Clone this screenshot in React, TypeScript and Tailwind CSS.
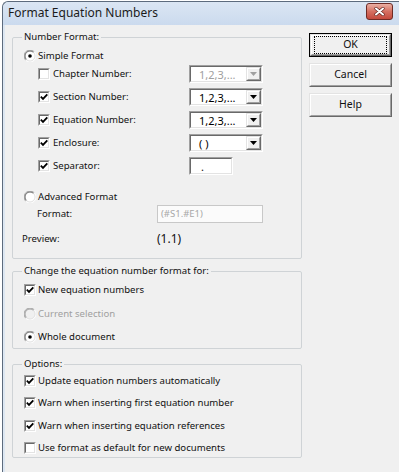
import React from 'react';

const Sunken: React.FC<{ className?: string; innerClass?: string; children?: React.ReactNode }> = ({ className = '', innerClass = 'bg-white', children }) => (
  <div className={`border border-t-[#a0a0a0] border-l-[#a0a0a0] border-b-white border-r-white ${className}`}>
    <div className={`h-full border border-t-[#696969] border-l-[#696969] border-b-[#e3e3e3] border-r-[#e3e3e3] ${innerClass}`}>
      {children}
    </div>
  </div>
);

const Raised: React.FC<{ className?: string; children?: React.ReactNode }> = ({ className = '', children }) => (
  <div className={`border border-t-[#e3e3e3] border-l-[#e3e3e3] border-b-[#696969] border-r-[#696969] ${className}`}>
    <div className="h-full border border-t-white border-l-white border-b-[#a0a0a0] border-r-[#a0a0a0] bg-[#f0f0f0] flex items-center justify-center">
      {children}
    </div>
  </div>
);

const Checkbox: React.FC<{ checked?: boolean }> = ({ checked }) => (
  <Sunken className="w-[12px] h-[12px] shrink-0" innerClass="bg-white flex items-center justify-center">
    {checked && (
      <svg width="8" height="8" viewBox="0 0 8 8">
        <path d="M0.8 3.7 L3 5.9 L7.3 1.4" fill="none" stroke="#000" strokeWidth="1.8" />
      </svg>
    )}
  </Sunken>
);

const Radio: React.FC<{ checked?: boolean; disabled?: boolean }> = ({ checked, disabled }) => (
  <svg width="12" height="12" viewBox="0 0 12 12" className="shrink-0">
    <circle cx="6" cy="6" r="5" fill={disabled ? '#f0f0f0' : '#fff'} />
    <path d="M1.75 10.25 A6 6 0 0 1 10.25 1.75" fill="none" stroke="#a0a0a0" strokeWidth="1" />
    <path d="M10.25 1.75 A6 6 0 0 1 1.75 10.25" fill="none" stroke="#fff" strokeWidth="1" />
    <path d="M2.46 9.54 A5 5 0 0 1 9.54 2.46" fill="none" stroke={disabled ? '#a0a0a0' : '#696969'} strokeWidth="1" />
    <path d="M9.54 2.46 A5 5 0 0 1 2.46 9.54" fill="none" stroke="#e3e3e3" strokeWidth="1" />
    {checked && <circle cx="6" cy="6" r="1.8" fill="#000" />}
  </svg>
);

const Combo: React.FC<{ value: string; disabled?: boolean }> = ({ value, disabled }) => (
  <Sunken className="w-[74px] h-[18px]" innerClass="bg-white flex items-center">
    <span className={`flex-1 pl-[8px] text-[11px] leading-none ${disabled ? 'text-[#a0a0a0]' : 'text-black'}`}>{value}</span>
    <Raised className="w-[15px] h-[14px]">
      <svg width="7" height="4" viewBox="0 0 7 4">
        <polygon points="0,0 7,0 3.5,4" fill={disabled ? '#a0a0a0' : '#000'} />
      </svg>
    </Raised>
  </Sunken>
);

const DlgButton: React.FC<{ label: string; isDefault?: boolean }> = ({ label, isDefault }) => (
  <div className={`w-[83px] h-[24px] ${isDefault ? 'border border-black' : ''}`}>
    <Raised className="h-full">
      <div className={`w-full h-full flex items-center justify-center text-[10.5px] ${isDefault ? 'm-[2px] border border-dotted border-black' : ''}`}>
        {label}
      </div>
    </Raised>
  </div>
);

const Group: React.FC<{ title: string; className?: string; children?: React.ReactNode }> = ({ title, className = '', children }) => (
  <fieldset className={`border border-[#cfd3d6] rounded-[2px] pl-[9px] ${className}`}>
    <legend className="px-[2px] leading-[14px]">{title}</legend>
    {children}
  </fieldset>
);

const CheckRow: React.FC<{ label: string; checked?: boolean; className?: string }> = ({ label, checked, className = '' }) => (
  <div className={`flex items-center gap-[2px] h-[16px] pl-[2px] ${className}`}>
    <Checkbox checked={checked} />
    <span>{label}</span>
  </div>
);

const ComboRow: React.FC<{ label: string; checked?: boolean; children?: React.ReactNode }> = ({ label, checked, children }) => (
  <div className="flex items-center h-[18px] pl-[16px]">
    <div className="w-[151px] flex items-center gap-[3px]">
      <Checkbox checked={checked} />
      <span>{label}</span>
    </div>
    {children}
  </div>
);

export default function App() {
  return (
    <div className="w-[399px] h-[472px] overflow-hidden bg-white font-['Noto_Sans',sans-serif] text-[9.6px] text-[#111]">
      <div className="ml-[2px] mt-[1px] h-full border-l border-t border-[#5d6b7d] rounded-tl-[6px] bg-[#dde7f2] flex flex-col">
        {/* Title bar */}
        <div className="h-[23px] flex items-start bg-gradient-to-b from-[#dbe6f3] to-[#cbdaee] rounded-tl-[6px]">
          <span className="pl-[5px] pt-[3px] text-[12px] leading-[16px] text-[#1b1b1b]">Format Equation Numbers</span>
          <div className="ml-auto mr-[6px] mt-[1px] w-[27px] h-[17px] rounded-[3px] border border-[#6e2b25] bg-gradient-to-b from-[#eab0a4] via-[#d56f61] to-[#c4493d] flex items-center justify-center">
            <svg width="11" height="9" viewBox="0 0 11 9">
              <path d="M2 1.5 L9 7.5 M9 1.5 L2 7.5" stroke="#5a1f1a" strokeWidth="3.2" strokeLinecap="round" />
              <path d="M2 1.5 L9 7.5 M9 1.5 L2 7.5" stroke="#fff" strokeWidth="2" strokeLinecap="round" />
            </svg>
          </div>
        </div>

        {/* Body */}
        <div className="ml-[2px] flex-1 bg-[#f0f0f0] flex pl-[7px]">
          <div className="w-[290px] pt-[5px] flex flex-col">
            <Group title="Number Format:" className="pb-[10px]">
              <div className="flex items-center gap-[2px] h-[18px] pl-[2px] mt-[3px]">
                <Radio checked />
                <span>Simple Format</span>
              </div>
              <div className="flex flex-col gap-[5px]">
                <ComboRow label="Chapter Number:">
                  <Combo value="1,2,3,..." disabled />
                </ComboRow>
                <ComboRow label="Section Number:" checked>
                  <Combo value="1,2,3,..." />
                </ComboRow>
                <ComboRow label="Equation Number:" checked>
                  <Combo value="1,2,3,..." />
                </ComboRow>
                <ComboRow label="Enclosure:" checked>
                  <Combo value="( )" />
                </ComboRow>
                <ComboRow label="Separator:" checked>
                  <Sunken className="w-[44px] h-[18px]" innerClass="bg-white flex items-center">
                    <span className="pl-[10px] text-[11px] leading-none">.</span>
                  </Sunken>
                </ComboRow>
              </div>
              <div className="flex items-center gap-[2px] h-[16px] pl-[2px] mt-[14px]">
                <Radio />
                <span>Advanced Format</span>
              </div>
              <div className="flex items-center h-[18px] pl-[15px]">
                <span className="w-[120px]">Format:</span>
                <div className="w-[106px] h-[18px] border border-[#c8c8c8] bg-[#fbfbfb] flex items-center">
                  <span className="pl-[3px] text-[9.5px] text-[#a8a8a8]">(#S1.#E1)</span>
                </div>
              </div>
              <div className="flex items-center h-[18px] mt-[7px]">
                <span className="w-[135px]">Preview:</span>
                <span className="text-[12px]">(1.1)</span>
              </div>
            </Group>

            <Group title="Change the equation number format for:" className="mt-[5px] pb-[3px]">
              <CheckRow label="New equation numbers" checked className="mt-[4px]" />
              <div className="flex items-center gap-[2px] h-[16px] pl-[2px] mt-[8px] text-[#a0a0a0]">
                <Radio disabled />
                <span>Current selection</span>
              </div>
              <div className="flex items-center gap-[2px] h-[16px] pl-[2px] mt-[7px]">
                <Radio checked />
                <span>Whole document</span>
              </div>
            </Group>

            <Group title="Options:" className="mt-[8px] pb-[1px]">
              <CheckRow label="Update equation numbers automatically" checked className="mt-[2px]" />
              <CheckRow label="Warn when inserting first equation number" checked className="mt-[6px]" />
              <CheckRow label="Warn when inserting equation references" checked className="mt-[7px]" />
              <CheckRow label="Use format as default for new documents" className="mt-[6px]" />
            </Group>
          </div>

          <div className="ml-[7px] pt-[8px] flex flex-col gap-[6px]">
            <DlgButton label="OK" isDefault />
            <DlgButton label="Cancel" />
            <DlgButton label="Help" />
          </div>
        </div>
      </div>
    </div>
  );
}
